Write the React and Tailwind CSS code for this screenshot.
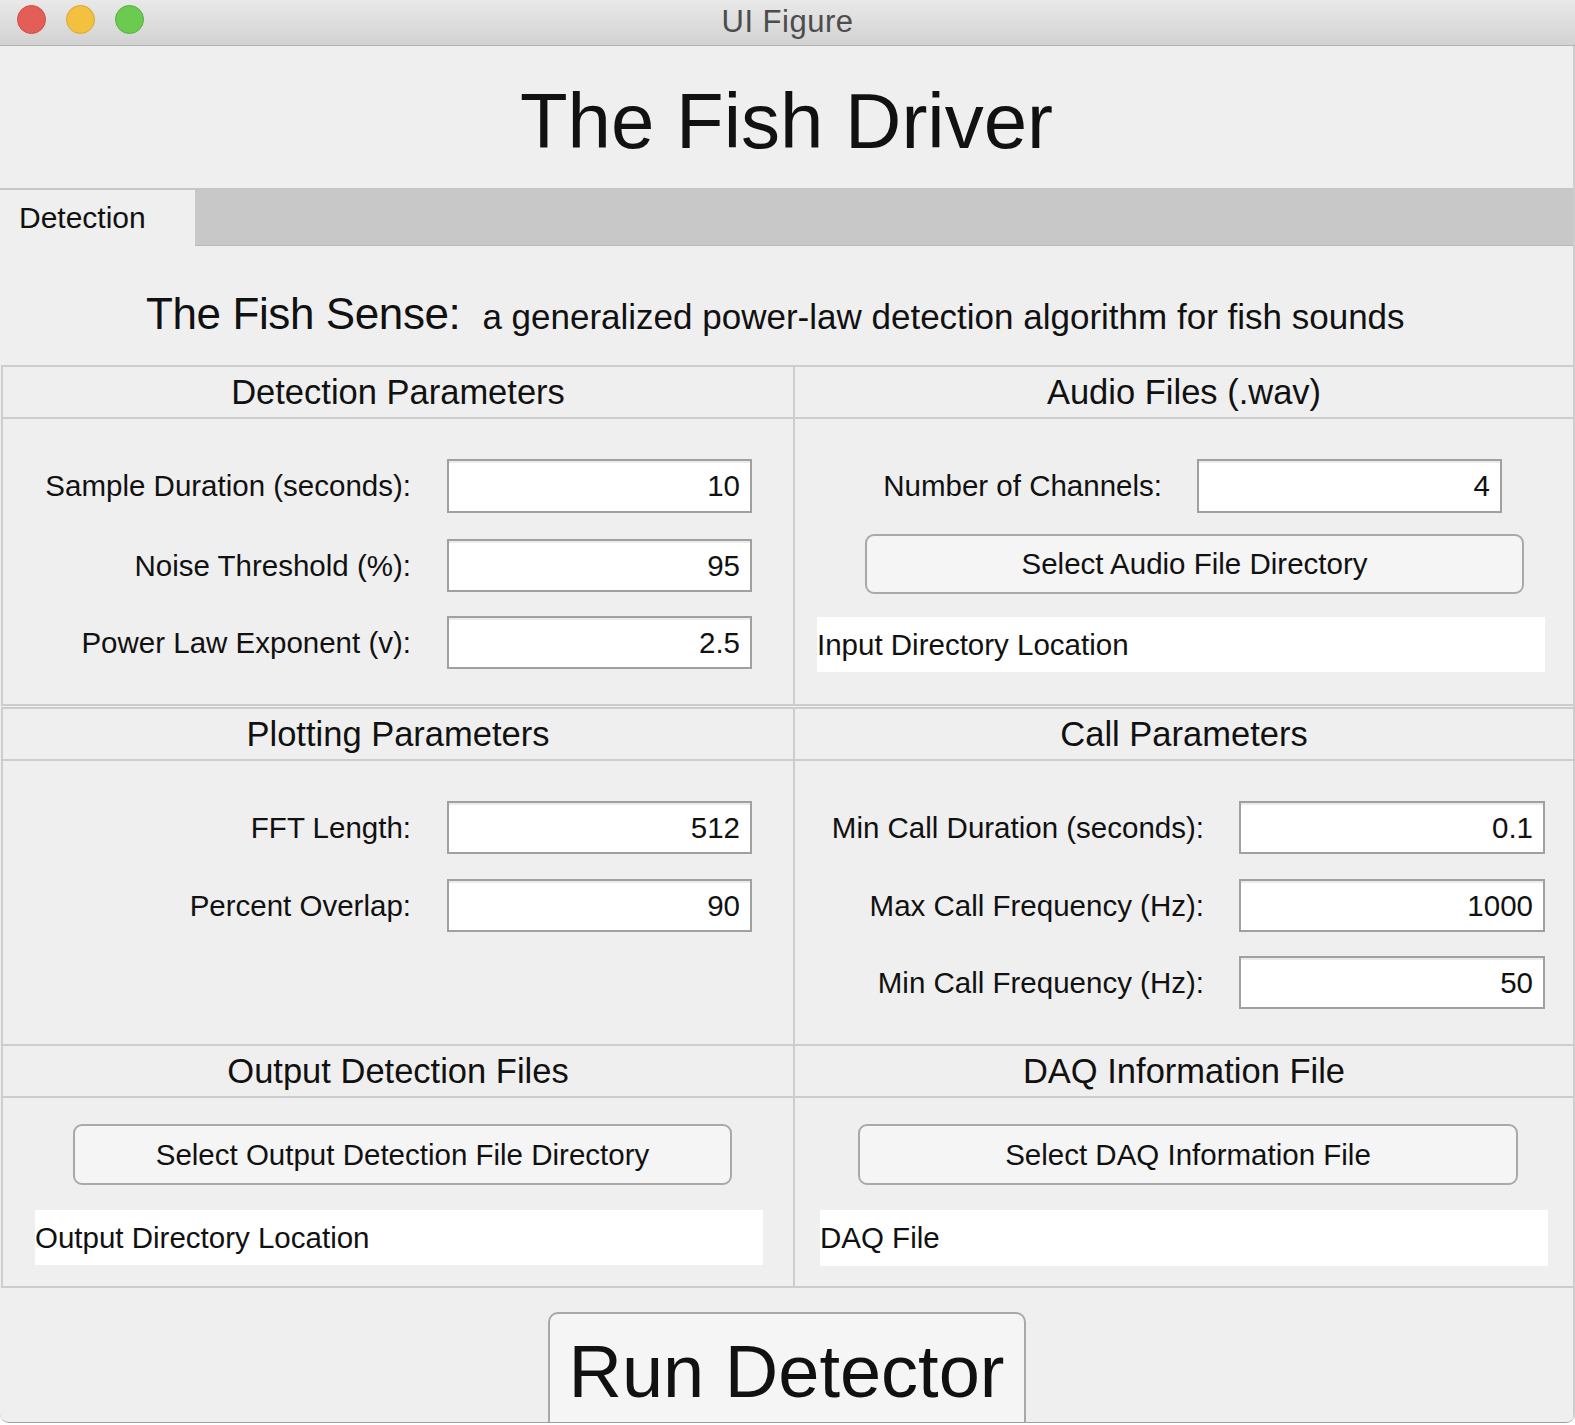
import React from "react";

function ValueBox({ value, className }) {
  return (
    <div
      className={`flex items-center justify-end bg-white border-2 border-[#a0a0a0] pr-[10px] shadow-[inset_0_2px_0_#ececec] ${className}`}
    >
      {value}
    </div>
  );
}

function PanelHeader({ title }) {
  return (
    <div className="h-[52px] flex items-center justify-center border-b-2 border-[#cdcdcd] text-[34.5px] leading-none">
      {title}
    </div>
  );
}

function FileButton({ label, className }) {
  return (
    <div
      className={`flex items-center justify-center rounded-[9px] border-2 border-[#a9a9a9] bg-[#f5f5f5] ${className}`}
    >
      {label}
    </div>
  );
}

function PathBox({ text, className }) {
  return (
    <div className={`flex items-center bg-white ${className}`}>{text}</div>
  );
}

export default function App() {
  return (
    <div className="w-[1575px] h-[1425px] bg-white overflow-hidden font-['Liberation_Sans',Arial,Helvetica,sans-serif] text-[#111]">
      <div className="h-[1423px] flex flex-col bg-[#efefef] rounded-b-[9px] border-b border-[#9f9f9f] overflow-hidden">
        {/* window title bar */}
        <div className="h-[46px] shrink-0 grid grid-cols-[1fr_auto_1fr] items-center pb-[6px] border-b border-[#b2b2b2] bg-linear-to-b from-[#e9e9e9] to-[#d2d2d2]">
          <div className="flex gap-[20px] pl-[17px]">
            <div className="w-[29px] h-[29px] rounded-full bg-[#e45e58] border border-[#cf4c45]" />
            <div className="w-[29px] h-[29px] rounded-full bg-[#f3c13f] border border-[#d9a631]" />
            <div className="w-[29px] h-[29px] rounded-full bg-[#6bca4f] border border-[#55b03d]" />
          </div>
          <div className="pt-[3px] text-[31px] tracking-[0.5px] leading-none text-[#4d4d4d]">
            UI Figure
          </div>
          <div />
        </div>

        <div className="flex-1 flex flex-col border-r-2 border-[#cdcdcd]">
          {/* app title */}
          <div className="h-[142px] shrink-0 pt-[36px]">
            <h1 className="text-[78px] leading-none text-center">
              The Fish Driver
            </h1>
          </div>

          {/* tabs */}
          <div className="h-[58px] shrink-0 flex border-t-2 border-[#c6c6c6]">
            <div className="w-[195px] flex items-center pl-[19px] text-[30px] leading-none bg-[#efefef]">
              Detection
            </div>
            <div className="flex-1 bg-[#c8c8c8] border-b border-[#b9b9b9]" />
          </div>

          {/* subtitle */}
          <div className="h-[119px] shrink-0 pt-[46px] pl-[146px] flex items-baseline">
            <span className="text-[44px] leading-none tracking-[-0.4px]">
              The Fish Sense:
            </span>
            <span className="ml-[22px] text-[35px] leading-none">
              a generalized power-law detection algorithm for fish sounds
            </span>
          </div>

          {/* panels */}
          <div className="pl-[1px] text-[29.5px] leading-none">
            {/* row 1 */}
            <div className="flex border-t-2 border-b-2 border-[#cdcdcd]">
              <div className="w-[794px] border-l-2 border-r-2 border-[#cdcdcd]">
                <PanelHeader title="Detection Parameters" />
                <div className="h-[285px] flex flex-col">
                  <div className="mt-[40px] grid grid-cols-[408px_305px] gap-x-[36px] items-center">
                    <div className="text-right">Sample Duration (seconds):</div>
                    <ValueBox value="10" className="h-[54px]" />
                  </div>
                  <div className="mt-[26px] grid grid-cols-[408px_305px] gap-x-[36px] items-center">
                    <div className="text-right">Noise Threshold (%):</div>
                    <ValueBox value="95" className="h-[53px]" />
                  </div>
                  <div className="mt-[24px] grid grid-cols-[408px_305px] gap-x-[36px] items-center">
                    <div className="text-right">Power Law Exponent (v):</div>
                    <ValueBox value="2.5" className="h-[53px]" />
                  </div>
                </div>
              </div>
              <div className="flex-1">
                <PanelHeader title="Audio Files (.wav)" />
                <div className="h-[285px] flex flex-col">
                  <div className="mt-[40px] grid grid-cols-[367px_305px] gap-x-[35px] items-center">
                    <div className="text-right">Number of Channels:</div>
                    <ValueBox value="4" className="h-[54px]" />
                  </div>
                  <FileButton
                    label="Select Audio File Directory"
                    className="mt-[21px] ml-[70px] w-[659px] h-[60px]"
                  />
                  <PathBox
                    text="Input Directory Location"
                    className="mt-[23px] ml-[22px] w-[728px] h-[55px]"
                  />
                </div>
              </div>
            </div>

            {/* row 2 */}
            <div className="mt-[1px] flex border-t-2 border-b-2 border-[#cdcdcd]">
              <div className="w-[794px] border-l-2 border-r-2 border-[#cdcdcd]">
                <PanelHeader title="Plotting Parameters" />
                <div className="h-[283px] flex flex-col">
                  <div className="mt-[40px] grid grid-cols-[408px_305px] gap-x-[36px] items-center">
                    <div className="text-right">FFT Length:</div>
                    <ValueBox value="512" className="h-[53px]" />
                  </div>
                  <div className="mt-[25px] grid grid-cols-[408px_305px] gap-x-[36px] items-center">
                    <div className="text-right">Percent Overlap:</div>
                    <ValueBox value="90" className="h-[53px]" />
                  </div>
                </div>
              </div>
              <div className="flex-1">
                <PanelHeader title="Call Parameters" />
                <div className="h-[283px] flex flex-col">
                  <div className="mt-[40px] grid grid-cols-[409px_306px] gap-x-[35px] items-center">
                    <div className="text-right">Min Call Duration (seconds):</div>
                    <ValueBox value="0.1" className="h-[53px]" />
                  </div>
                  <div className="mt-[25px] grid grid-cols-[409px_306px] gap-x-[35px] items-center">
                    <div className="text-right">Max Call Frequency (Hz):</div>
                    <ValueBox value="1000" className="h-[53px]" />
                  </div>
                  <div className="mt-[24px] grid grid-cols-[409px_306px] gap-x-[35px] items-center">
                    <div className="text-right">Min Call Frequency (Hz):</div>
                    <ValueBox value="50" className="h-[53px]" />
                  </div>
                </div>
              </div>
            </div>

            {/* row 3 */}
            <div className="flex border-b-2 border-[#cdcdcd]">
              <div className="w-[794px] border-l-2 border-r-2 border-[#cdcdcd]">
                <PanelHeader title="Output Detection Files" />
                <div className="h-[188px] flex flex-col">
                  <FileButton
                    label="Select Output Detection File Directory"
                    className="mt-[26px] ml-[70px] w-[659px] h-[61px]"
                  />
                  <PathBox
                    text="Output Directory Location"
                    className="mt-[25px] ml-[32px] w-[728px] h-[55px]"
                  />
                </div>
              </div>
              <div className="flex-1">
                <PanelHeader title="DAQ Information File" />
                <div className="h-[188px] flex flex-col">
                  <FileButton
                    label="Select DAQ Information File"
                    className="mt-[26px] ml-[63px] w-[660px] h-[61px]"
                  />
                  <PathBox
                    text="DAQ File"
                    className="mt-[25px] ml-[25px] w-[728px] h-[56px]"
                  />
                </div>
              </div>
            </div>
          </div>

          {/* run */}
          <div className="flex-1 pt-[24px]">
            <button className="mx-auto w-[478px] h-[130px] flex justify-center items-start pt-[21px] rounded-[10px] border-2 border-[#a8a8a8] bg-[#f5f5f5] text-[74px] leading-none">
              Run Detector
            </button>
          </div>
        </div>
      </div>
    </div>
  );
}
